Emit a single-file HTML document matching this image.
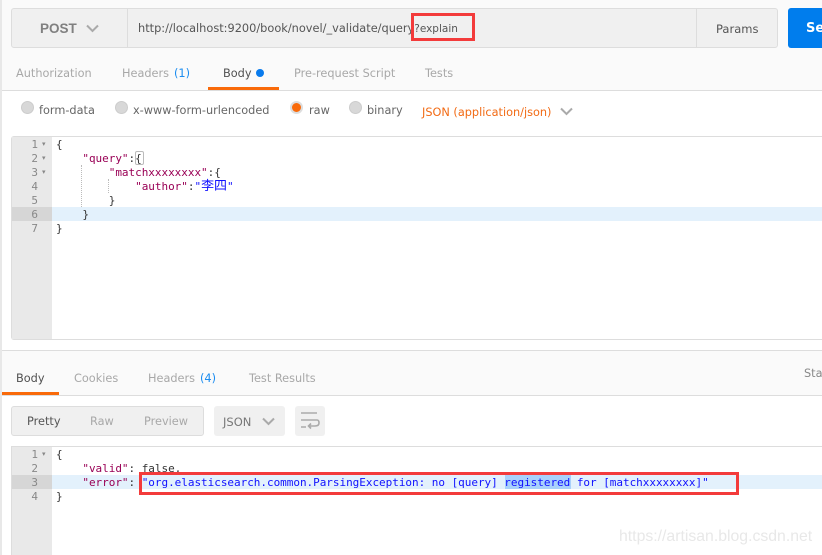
<!DOCTYPE html>
<html><head><meta charset="utf-8">
<style>
*{box-sizing:border-box}
html,body{margin:0;padding:0}
body{width:822px;height:555px;position:relative;overflow:hidden;background:#fff;font-family:"DejaVu Sans","Liberation Sans",sans-serif}
.a{position:absolute}
.t{position:absolute;white-space:nowrap;font-size:11.3px;line-height:16px;font-family:"DejaVu Sans","Liberation Sans",sans-serif}
.c{position:absolute;white-space:pre;font:11px/14px "DejaVu Sans Mono","Noto Sans CJK SC",monospace;color:#333;letter-spacing:-.03px;margin-top:1px}
.n{position:absolute;width:26px;text-align:right;left:12px;font:11px/14px "DejaVu Sans Mono",monospace;color:#888;margin-top:1px}
.k{color:#905}.s{color:#11f}
.r{position:absolute;width:13px;height:13px;border-radius:50%;background:#d8d8d8;border:1px solid #ccc}
.g{position:absolute;color:#888;font-size:7px}
</style></head><body>
<div class="a" style="left:0;top:0;width:822px;height:90px;background:#fafafa"></div>
<div class="a" style="left:0;top:351px;width:822px;height:44px;background:#fafafa"></div>

<!-- URL bar -->
<div class="a" style="left:11px;top:8px;width:767px;height:40px;background:#f0f0f0;border:1px solid #ddd;border-radius:3px"></div>
<div class="a" style="left:127px;top:9px;width:1px;height:38px;background:#ddd"></div>
<div class="a" style="left:696px;top:9px;width:1px;height:38px;background:#ddd"></div>
<div class="t" style="left:40px;top:21px;font-size:13.5px;font-weight:bold;color:#808080;font-family:'Liberation Sans',sans-serif">POST</div>
<svg class="a" style="left:86px;top:24px" width="13" height="9"><path d="M1 1.500 6.500 7 12 1.500" fill="none" stroke="#aaa" stroke-width="2"/></svg>
<div class="t" style="left:138px;top:20px;color:#555;font-size:11.35px">http://localhost:9200/book/novel/_validate/query<span style="font-size:10.5px">?explain</span></div>
<div class="t" style="left:716px;top:21px;color:#555;font-size:11.500px">Params</div>
<div class="a" style="left:788px;top:8px;width:40px;height:40px;background:#007ded;border-radius:3px"></div>
<div class="t" style="left:806px;top:21px;color:#fff;font-size:13px;font-weight:bold">Se</div>
<div class="a" style="left:411px;top:13px;width:64px;height:28px;border:3px solid #f33b3b"></div>

<!-- Request tabs -->
<div class="a" style="left:0;top:90px;width:822px;height:1px;background:#ddd"></div>
<div class="t" style="left:16px;top:65.500px;color:#a8a8a8">Authorization</div>
<div class="t" style="left:122px;top:65.500px;color:#a8a8a8">Headers</div>
<div class="t" style="left:174px;top:65.500px;color:#1a8cf0">(1)</div>
<div class="t" style="left:223px;top:65.500px;color:#505050">Body</div>
<div class="a" style="left:256px;top:69px;width:8px;height:8px;border-radius:50%;background:#097bed"></div>
<div class="t" style="left:294px;top:65.500px;color:#a8a8a8">Pre-request Script</div>
<div class="t" style="left:425px;top:65.500px;color:#a8a8a8">Tests</div>
<div class="a" style="left:208px;top:87px;width:71px;height:3px;background:#f96a0a"></div>

<!-- Radios -->
<div class="r" style="left:21px;top:101px"></div>
<div class="t" style="left:39px;top:103px;color:#666">form-data</div>
<div class="r" style="left:115px;top:101px"></div>
<div class="t" style="left:133px;top:103px;color:#666">x-www-form-urlencoded</div>
<div class="r" style="left:290px;top:101px;background:#f96a0a;border:2px solid #ddd"></div>
<div class="t" style="left:309px;top:103px;color:#666">raw</div>
<div class="r" style="left:349px;top:101px"></div>
<div class="t" style="left:367px;top:103px;color:#666">binary</div>
<div class="t" style="left:422px;top:105px;color:#f26b15">JSON (application/json)</div>
<svg class="a" style="left:560px;top:107px" width="13" height="9"><path d="M1 1.500 6.500 7 12 1.500" fill="none" stroke="#aaa" stroke-width="2"/></svg>

<!-- Request editor -->
<div class="a" style="left:11px;top:136px;width:811px;height:204px;border:1px solid #ddd;border-right:0;border-radius:3px 0 0 3px"></div>
<div class="a" style="left:12px;top:137px;width:40px;height:202px;background:#e9e9e9"></div>
<div class="a" style="left:12px;top:207px;width:40px;height:14px;background:#d6d6d6"></div>
<div class="a" style="left:52px;top:207px;width:770px;height:14px;background:#e3f1fc"></div>
<div class="a" style="left:81px;top:165px;height:42px;border-left:1px dotted #bbb"></div>
<div class="a" style="left:108px;top:179px;height:14px;border-left:1px dotted #bbb"></div>
<div class="n" style="top:137px">1</div><div class="g" style="left:42px;top:140px">▾</div>
<div class="n" style="top:151px">2</div><div class="g" style="left:42px;top:154px">▾</div>
<div class="n" style="top:165px">3</div><div class="g" style="left:42px;top:168px">▾</div>
<div class="n" style="top:179px">4</div>
<div class="n" style="top:193px">5</div>
<div class="n" style="top:207px">6</div>
<div class="n" style="top:221px">7</div>
<div class="c" style="left:56px;top:137px">{</div>
<div class="c" style="left:56px;top:151px">    <span class="k">"query"</span>:{</div>
<div class="a" style="left:135px;top:151px;width:9px;height:14px;border:1px solid #bbb;border-radius:2px"></div>
<div class="c" style="left:56px;top:165px">        <span class="k">"matchxxxxxxxx"</span>:{</div>
<div class="c" style="left:56px;top:179px">            <span class="k">"author"</span>:<span class="s">"<span style="font-size:13px;line-height:14px">李四</span>"</span></div>
<div class="c" style="left:56px;top:193px">        }</div>
<div class="c" style="left:56px;top:207px">    }</div>
<div class="c" style="left:56px;top:221px">}</div>

<!-- Response tabs -->
<div class="a" style="left:0;top:350px;width:822px;height:1px;background:#ddd"></div>
<div class="a" style="left:0;top:395px;width:822px;height:1px;background:#ddd"></div>
<div class="a" style="left:1px;top:392px;width:58px;height:3px;background:#f96a0a"></div>
<div class="t" style="left:16px;top:371px;color:#505050">Body</div>
<div class="t" style="left:74px;top:371px;color:#a8a8a8">Cookies</div>
<div class="t" style="left:148px;top:371px;color:#a8a8a8">Headers</div>
<div class="t" style="left:200px;top:371px;color:#1a8cf0">(4)</div>
<div class="t" style="left:249px;top:371px;color:#a8a8a8">Test Results</div>
<div class="t" style="left:804px;top:366px;color:#888">Stat</div>

<!-- Response toolbar -->
<div class="a" style="left:11px;top:406px;width:193px;height:30px;background:#f0f0f0;border:1px solid #ddd;border-radius:3px"></div>
<div class="t" style="left:27px;top:414px;color:#555">Pretty</div>
<div class="t" style="left:90px;top:414px;color:#a8a8a8">Raw</div>
<div class="t" style="left:144px;top:414px;color:#a8a8a8">Preview</div>
<div class="a" style="left:214px;top:406px;width:71px;height:30px;background:#f0f0f0;border-radius:3px"></div>
<div class="t" style="left:223px;top:414px;color:#777;font-size:11.500px">JSON</div>
<svg class="a" style="left:262px;top:417px" width="13" height="9"><path d="M1 1.500 6.500 7 12 1.500" fill="none" stroke="#aaa" stroke-width="2"/></svg>
<div class="a" style="left:295px;top:406px;width:30px;height:30px;background:#f0f0f0;border-radius:3px"></div>
<svg class="a" style="left:295px;top:406px" width="30" height="30"><path d="M6 7H22M6 14H22Q24 14 24 17 24 20 20 20H14M6 21H11M16 17.500 13.500 20l2.500 2.500" fill="none" stroke="#aaa" stroke-width="1.600"/></svg>

<!-- Response editor -->
<div class="a" style="left:11px;top:446px;width:811px;height:109px;border-top:1px solid #ddd;border-left:1px solid #ddd"></div>
<div class="a" style="left:12px;top:447px;width:40px;height:108px;background:#e9e9e9"></div>
<div class="a" style="left:12px;top:475px;width:40px;height:14px;background:#d6d6d6"></div>
<div class="a" style="left:52px;top:475px;width:770px;height:14px;background:#e3f1fc"></div>
<div class="a" style="left:505px;top:475px;width:66px;height:14px;background:#a8d1fb"></div>
<div class="n" style="top:447px">1</div><div class="g" style="left:42px;top:450px">▾</div>
<div class="n" style="top:461px">2</div>
<div class="n" style="top:475px">3</div>
<div class="n" style="top:489px">4</div>
<div class="c" style="left:56px;top:447px">{</div>
<div class="c" style="left:56px;top:461px">    <span class="k">"valid"</span>: false,</div>
<div class="c" style="left:56px;top:475px">    <span class="k">"error"</span>: <span class="s">"org.elasticsearch.common.ParsingException: no [query] registered for [matchxxxxxxxx]"</span></div>
<div class="c" style="left:56px;top:489px">}</div>
<div class="a" style="left:139px;top:472px;width:600px;height:23px;border:3px solid #f33b3b"></div>

<div class="t" style="left:619px;top:527px;font-size:15.800px;line-height:20px;color:#e8e8e8;font-family:'Liberation Sans',sans-serif">https://artisan.blog.csdn.net</div>
<div class="a" style="left:0;top:0;width:2px;height:555px;background:#e8e8e8"></div>
</body></html>
